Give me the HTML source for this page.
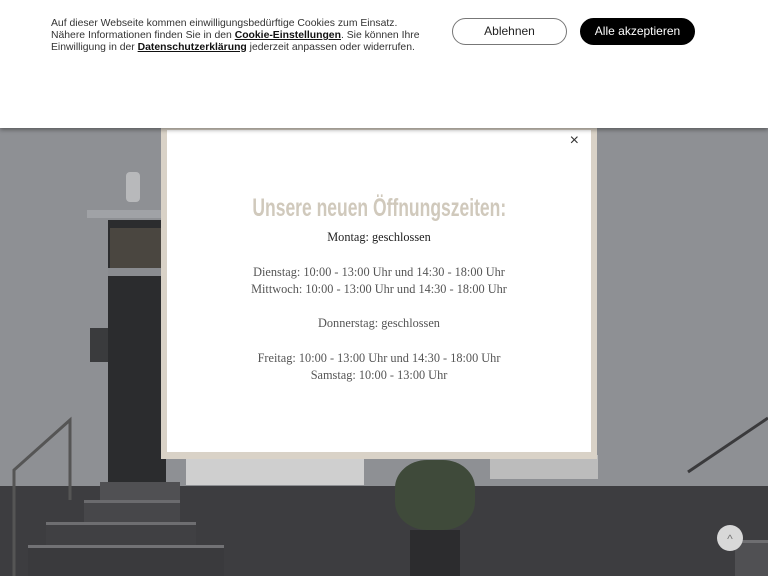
<!DOCTYPE html>
<html><head><meta charset="utf-8"><style>
*{margin:0;padding:0;box-sizing:border-box}
body{width:768px;height:576px;overflow:hidden;position:relative;background:#8d8f93;font-family:"Liberation Sans",sans-serif}
.hdr{position:absolute;left:0;top:0;width:768px;height:128px;background:#fff;z-index:5;box-shadow:0 2px 4px rgba(0,0,0,.35)}
.txt{position:absolute;left:51px;top:18px;font-size:10.4px;line-height:11.8px;color:#333;width:380px}
.txt b{color:#111;text-decoration:underline}
.btn{position:absolute;top:18px;height:27px;border-radius:14px;font-size:12px;line-height:25px;text-align:center}
.b1{left:452px;width:115px;border:1px solid #777;color:#222;background:#fff}
.b2{left:580px;width:115px;background:#000;color:#fff;border:1px solid #000}
.abs{position:absolute}
.modal{position:absolute;left:161px;top:128px;width:436px;height:331px;background:#d9d2c7}
.inner{position:absolute;left:6px;top:2px;width:424px;height:322px;background:#fff;text-align:center;font-family:"Liberation Serif",serif;color:#555;font-size:12.3px;line-height:17.3px}
.inner h2{font-weight:bold;color:#d0c9bc;font-size:25px;margin-top:58px;line-height:40px;white-space:nowrap}
.inner h2 span{display:inline-block;transform:scaleX(.70);font-family:"Liberation Sans",sans-serif}
</style></head><body>
<div class="abs" style="left:0;top:128px;width:768px;height:360px;background:#8e9094"></div>
<div class="abs" style="left:87px;top:210px;width:80px;height:8px;background:#a0a2a6"></div>
<div class="abs" style="left:108px;top:220px;width:58px;height:265px;background:#2b2c2e"></div>
<div class="abs" style="left:110px;top:228px;width:54px;height:40px;background:#4a4640"></div>
<div class="abs" style="left:108px;top:268px;width:58px;height:8px;background:#8a8c90"></div>
<div class="abs" style="left:90px;top:328px;width:18px;height:34px;background:#3a3b3d"></div>
<div class="abs" style="left:126px;top:172px;width:14px;height:30px;background:#b8b9bb;border-radius:4px"></div>
<div class="abs" style="left:0;top:486px;width:768px;height:90px;background:#3d3d40"></div>
<div class="abs" style="left:186px;top:455px;width:178px;height:30px;background:#cfcfcf"></div>
<div class="abs" style="left:490px;top:455px;width:108px;height:24px;background:#bcbcbc"></div>
<div class="abs" style="left:100px;top:482px;width:80px;height:20px;background:#505053"></div>
<div class="abs" style="left:84px;top:500px;width:96px;height:22px;background:#47474a;border-top:3px solid #6b6b6e"></div>
<div class="abs" style="left:46px;top:522px;width:150px;height:24px;background:#404043;border-top:3px solid #6e6e71"></div>
<div class="abs" style="left:28px;top:545px;width:196px;height:31px;background:#3a3a3d;border-top:3px solid #727275"></div>
<div class="abs" style="left:395px;top:460px;width:80px;height:70px;background:#3f4a3a;border-radius:40%"></div>
<div class="abs" style="left:410px;top:530px;width:50px;height:46px;background:#2c2c2e"></div>
<div class="abs" style="left:735px;top:540px;width:33px;height:36px;background:#505053;border-top:3px solid #6e6e71"></div>
<svg class="abs" style="left:0;top:0" width="768" height="576"><path d="M14 576 V470 L70 420 V500" stroke="#555" stroke-width="3" fill="none"/><path d="M688 472 L768 418" stroke="#3a3a3c" stroke-width="3" fill="none"/></svg>
<div class="abs" style="left:717px;top:525px;width:26px;height:26px;border-radius:50%;background:#d8d8d8;color:#777;font-size:12px;text-align:center;line-height:28px">^</div>
<div class="hdr">
<div class="txt">Auf dieser Webseite kommen einwilligungsbedürftige Cookies zum Einsatz.<br>Nähere Informationen finden Sie in den <b>Cookie-Einstellungen</b>. Sie können Ihre Einwilligung in der <b>Datenschutzerklärung</b> jederzeit anpassen oder widerrufen.</div>
<div class="btn b1">Ablehnen</div>
<div class="btn b2">Alle akzeptieren</div>
</div>
<div class="modal"><div class="inner">
<div class="abs" style="right:12px;top:2px;font-family:'Liberation Sans',sans-serif;font-size:16px;color:#333">×</div>
<h2><span>Unsere neuen Öffnungszeiten:</span></h2>
<div style="color:#222">Montag: geschlossen</div><br>
<div>Dienstag: 10:00 - 13:00 Uhr und 14:30 - 18:00 Uhr</div>
<div>Mittwoch: 10:00 - 13:00 Uhr und 14:30 - 18:00 Uhr</div><br>
<div>Donnerstag: geschlossen</div><br>
<div>Freitag: 10:00 - 13:00 Uhr und 14:30 - 18:00 Uhr</div>
<div>Samstag: 10:00 - 13:00 Uhr</div>
</div></div>
</body></html>
